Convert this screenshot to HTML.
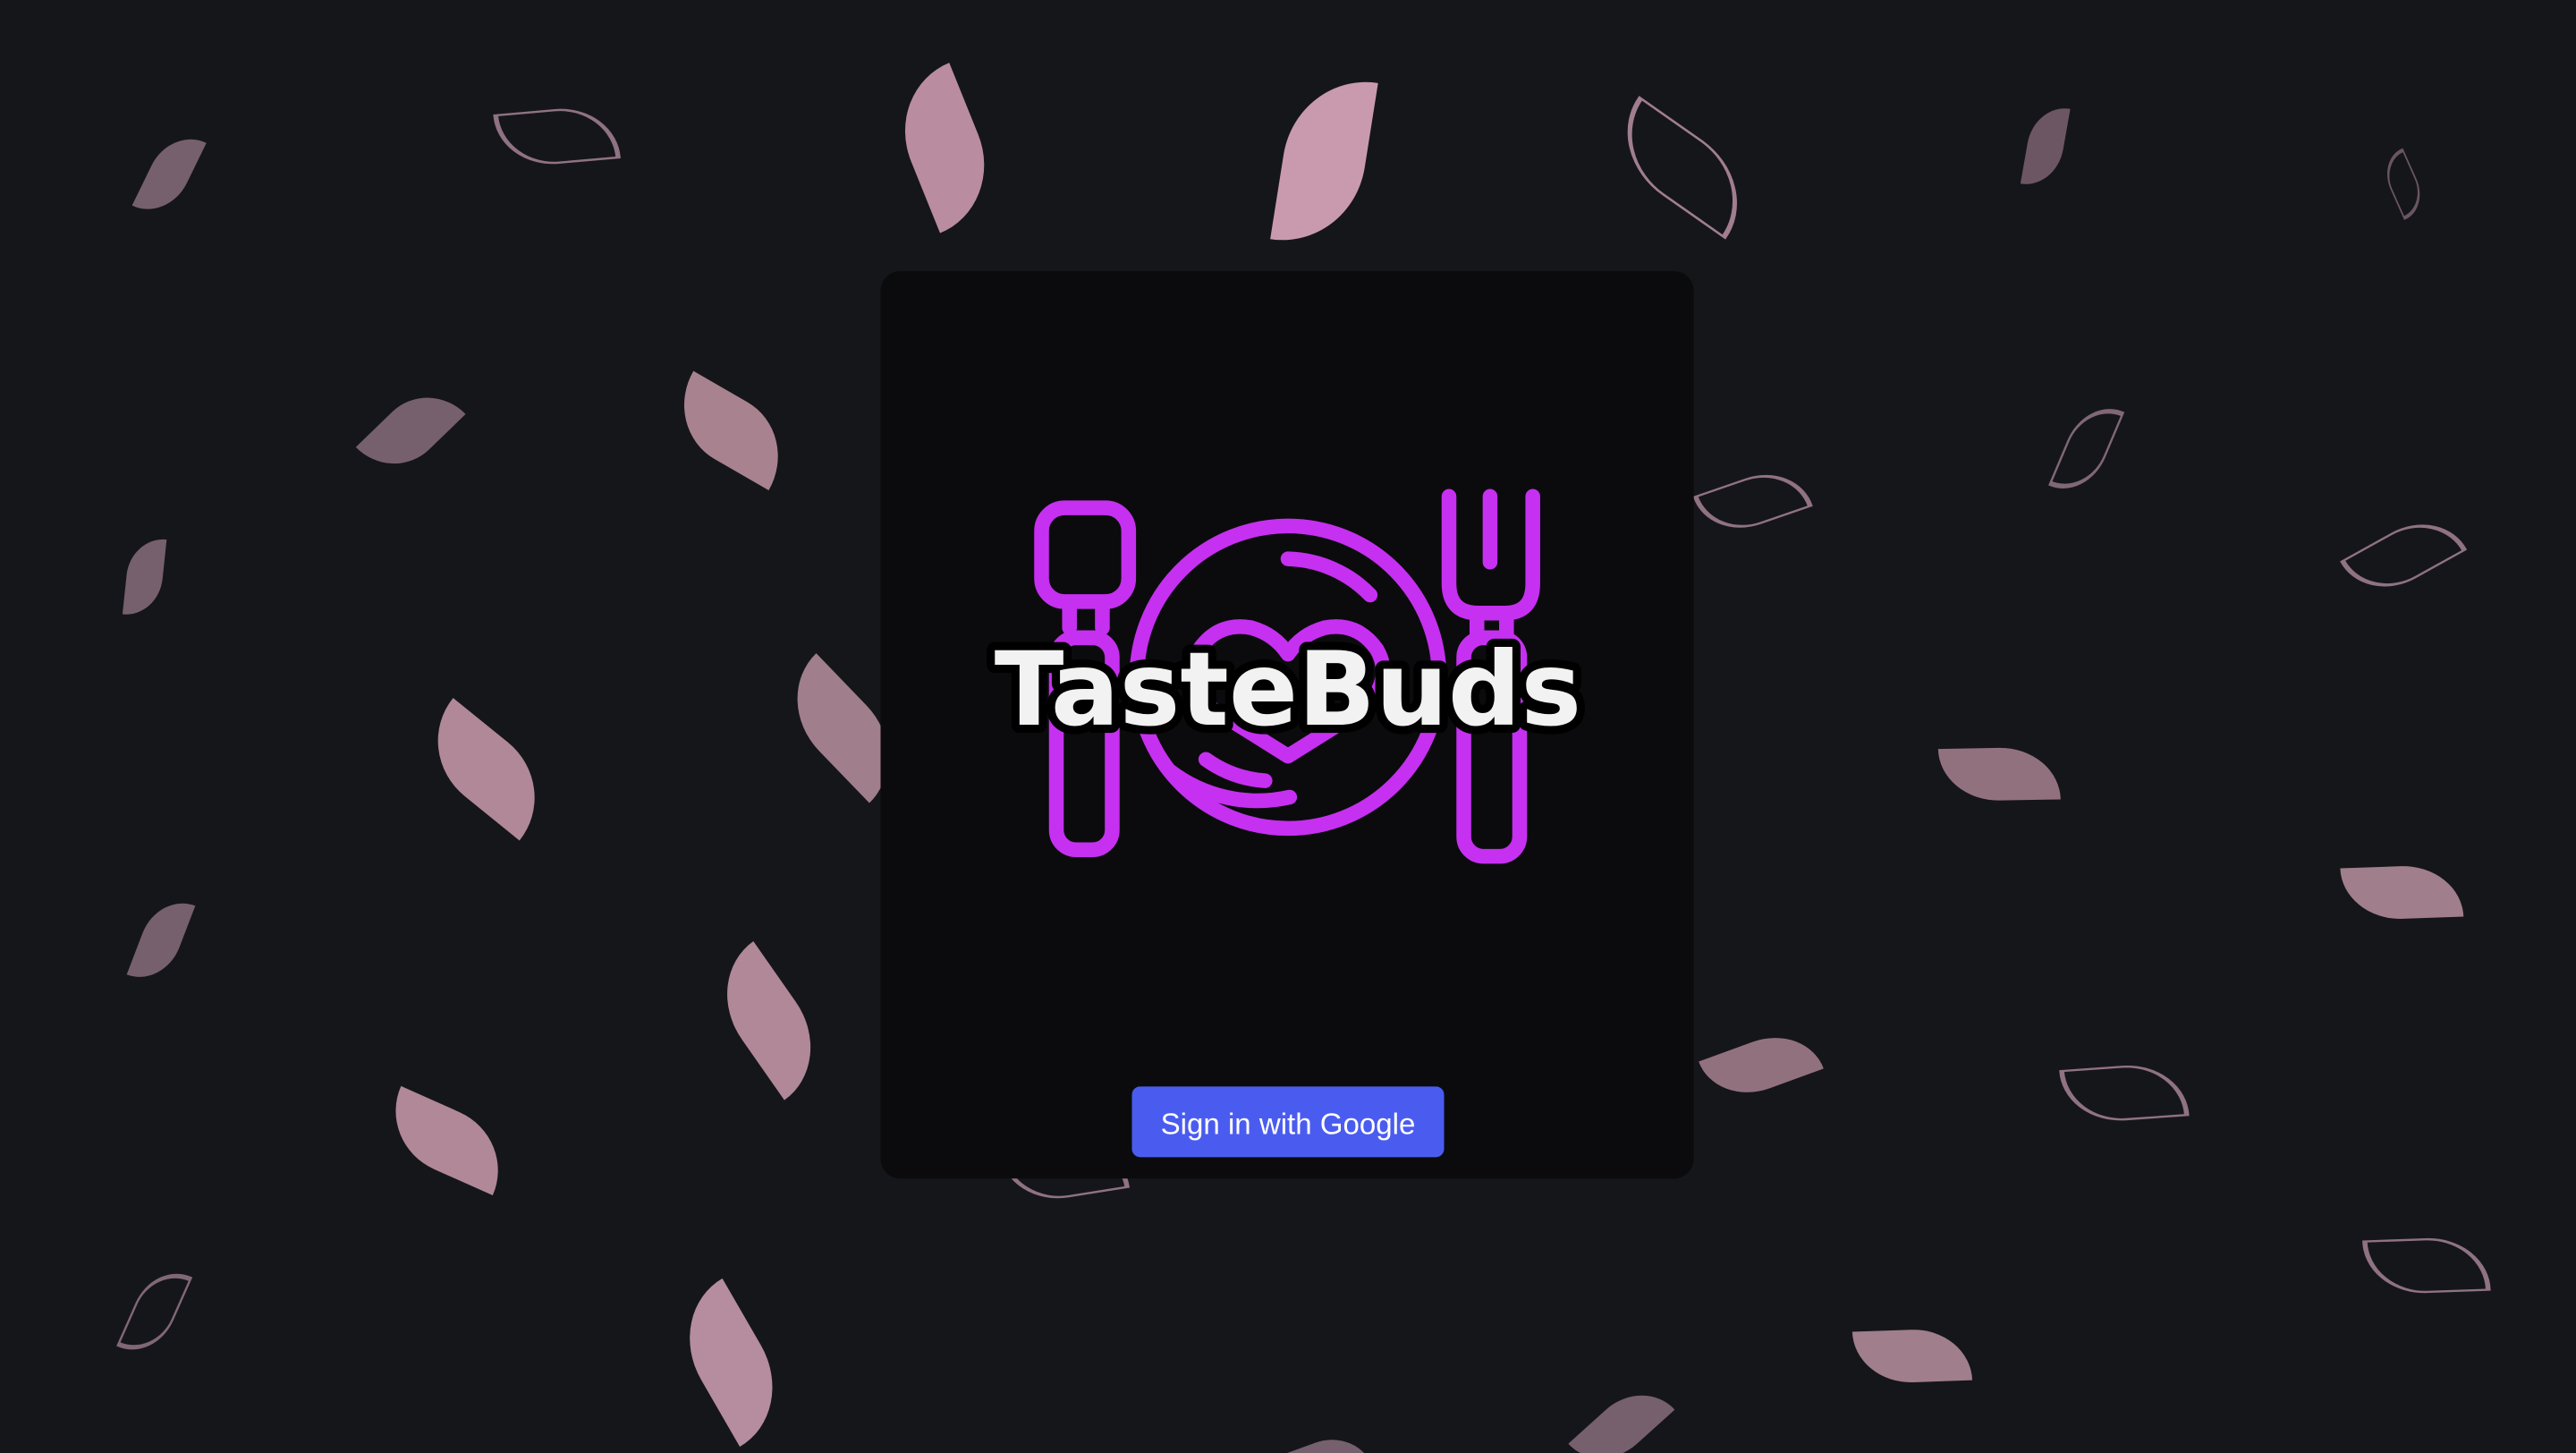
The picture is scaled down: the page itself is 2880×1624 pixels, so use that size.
<!DOCTYPE html>
<html><head><meta charset="utf-8"><style>
html,body{margin:0;padding:0;background:#15161a;overflow:hidden}
svg{display:block}
</style></head><body>
<svg width="2880" height="1624" viewBox="0 0 1568 884" preserveAspectRatio="none" xmlns="http://www.w3.org/2000/svg">
<defs>
<path id="lf" d="M1,-1 A2 1 0 0 0 -1,0 L-1,1 A2 1 0 0 0 1,0 Z"/>
</defs>
<rect width="1568" height="884" fill="#15161a"/>
<g>
<use href="#lf" transform="translate(103,106) rotate(26) scale(12,27)" fill="#76606d"/>
<use href="#lf" transform="translate(339,83) rotate(85) scale(16,36)" fill="none" stroke="#8f7283" stroke-width="0.083"/>
<use href="#lf" transform="translate(575,90) rotate(-22) scale(22,47)" fill="#ba8c9f"/>
<use href="#lf" transform="translate(806,98) rotate(9) scale(25,52)" fill="#c99aad"/>
<use href="#lf" transform="translate(1024,102) rotate(-55) scale(20,45)" fill="none" stroke="#a07e8f" stroke-width="0.07"/>
<use href="#lf" transform="translate(1245,89) rotate(10) scale(11,25)" fill="#6d5664"/>
<use href="#lf" transform="translate(1463,112) rotate(-24) scale(8,19)" fill="none" stroke="#6a5562" stroke-width="0.12"/>
<use href="#lf" transform="translate(250,262) rotate(46) scale(16,31)" fill="#76606d"/>
<use href="#lf" transform="translate(445,262) rotate(-60) scale(20,38)" fill="#a8828f"/>
<use href="#lf" transform="translate(88,351) rotate(6) scale(11,24)" fill="#76606d"/>
<use href="#lf" transform="translate(513,443) rotate(-44) scale(20,44)" fill="#a07e8c"/>
<use href="#lf" transform="translate(296,468) rotate(-51) scale(21,43)" fill="#b08897"/>
<use href="#lf" transform="translate(1067,305) rotate(71) scale(14,32)" fill="none" stroke="#8f7283" stroke-width="0.094"/>
<use href="#lf" transform="translate(1270,273) rotate(23) scale(12,28)" fill="none" stroke="#806777" stroke-width="0.11"/>
<use href="#lf" transform="translate(1463,338) rotate(61) scale(15,34)" fill="none" stroke="#8f7283" stroke-width="0.088"/>
<use href="#lf" transform="translate(1217,471) rotate(89) scale(16,37)" fill="#92717f"/>
<use href="#lf" transform="translate(98,572) rotate(21) scale(12,27)" fill="#76606d"/>
<use href="#lf" transform="translate(468,621) rotate(-35) scale(20,45)" fill="#b08897"/>
<use href="#lf" transform="translate(1462,543) rotate(88) scale(16,37)" fill="#a07e8c"/>
<use href="#lf" transform="translate(272,694) rotate(-66) scale(19,39)" fill="#b08897"/>
<use href="#lf" transform="translate(1072,648) rotate(70) scale(15,35)" fill="#92717f"/>
<use href="#lf" transform="translate(1293,665) rotate(86) scale(16,37)" fill="none" stroke="#8f7283" stroke-width="0.082"/>
<use href="#lf" transform="translate(94,798) rotate(24) scale(12,27)" fill="none" stroke="#806777" stroke-width="0.11"/>
<use href="#lf" transform="translate(445,829) rotate(-30) scale(21,47)" fill="#b58d9e"/>
<use href="#lf" transform="translate(1477,770) rotate(88) scale(16,37)" fill="none" stroke="#8f7283" stroke-width="0.082"/>
<use href="#lf" transform="translate(1164,825) rotate(88) scale(16,36)" fill="#a07e8c"/>
<use href="#lf" transform="translate(987,868) rotate(48) scale(14,31)" fill="#76606d"/>
<use href="#lf" transform="translate(805,890) rotate(70) scale(13,28)" fill="#76606d"/>
<use href="#lf" transform="translate(648,712) rotate(81) scale(16,36)" fill="none" stroke="#8f7283" stroke-width="0.083"/>
</g>
<rect x="536" y="165" width="495" height="552" rx="12" fill="#0b0b0d"/>
<g fill="none" stroke="#c630f0" stroke-width="9" stroke-linecap="round" stroke-linejoin="round">
<circle cx="784" cy="412" r="92"/>
<path d="M784,340 A72 72 0 0 1 834,362"/>
<path d="M712,469 A88 88 0 0 0 785,485"/>
<path d="M734,462 A70 70 0 0 0 770,475"/>
<path d="M784,460 L736,430 Q720,412 730,395 Q742,378 762,382 Q776,386 784,398 Q792,386 806,382 Q826,378 838,395 Q848,412 832,430 Z"/>
<rect x="634" y="309" width="53" height="57" rx="14"/>
<path d="M651,370 V382 M671,370 V382"/>
<rect x="643" y="388" width="34" height="129" rx="12"/>
<path d="M882,302 V355 Q882,373 900,373 H916 Q933,373 933,355 V302 M907,302 V342"/>
<path d="M899,375 V386 M917,375 V386"/>
<rect x="891" y="388" width="34" height="133" rx="12"/>
</g>
<text x="784" y="441" text-anchor="middle" font-family="DejaVu Sans, sans-serif" font-weight="bold" font-size="62" fill="#f2f2f2" stroke="#000" stroke-width="10" stroke-linejoin="round" paint-order="stroke">TasteBuds</text>
<rect x="689" y="661" width="190" height="43" rx="5" fill="#4a5cf0"/>
<text x="784" y="690" text-anchor="middle" font-family="Liberation Sans, sans-serif" font-size="18" fill="#fff">Sign in with Google</text>
</svg>
</body></html>
